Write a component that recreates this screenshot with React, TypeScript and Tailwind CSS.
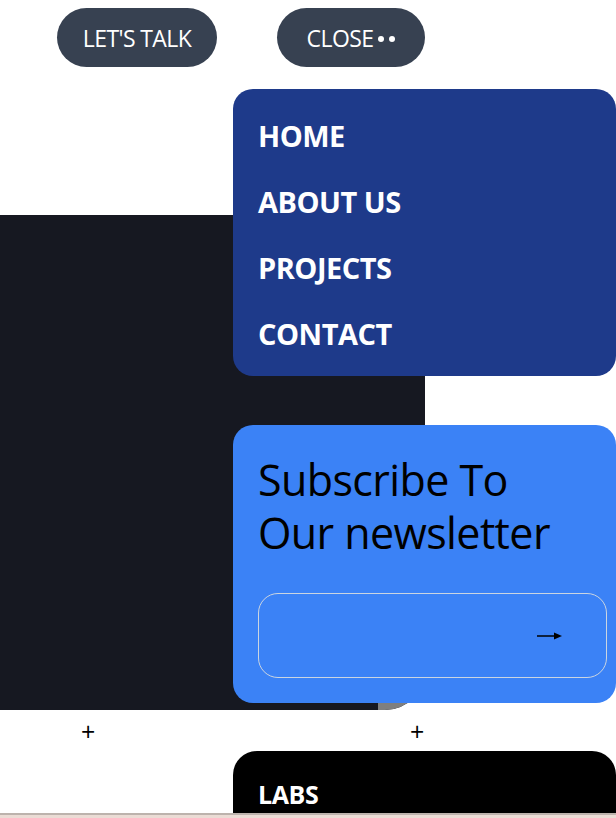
import React from "react";

export default function App() {
  const font = { fontFamily: '"Open Sans", "Noto Sans", sans-serif' };
  return (
    <div
      className="relative w-[616px] h-[818px] overflow-hidden bg-white"
      style={font}
    >
      <header className="flex items-start gap-[60px] pt-[8px] pl-[57px]">
        <button className="h-[59px] w-[160px] rounded-full bg-[#374151] pt-[2px] text-[23px] text-white tracking-[-0.6px]">
          LET'S TALK
        </button>
        <button className="flex h-[59px] w-[148px] items-center justify-center gap-[5px] rounded-full bg-[#374151] pt-[2px] text-[23px] text-white tracking-[-0.6px]">
          <span>CLOSE</span>
          <span className="flex gap-[5px] pt-[1px]">
            <span className="h-[6px] w-[6px] rounded-full bg-white" />
            <span className="h-[6px] w-[6px] rounded-full bg-white" />
          </span>
        </button>
      </header>

      <div className="relative mt-[148px] h-[495px] w-[425px] overflow-hidden rounded-br-[40px] bg-[#161821]">
        <div className="absolute bottom-0 right-0 h-[60px] w-[47px] bg-[#7f7f7f]" />
      </div>

      <div className="relative h-[41px] text-[25px] leading-none text-black">
        <span className="absolute left-[81px] top-[9px]">+</span>
        <span className="absolute left-[410px] top-[9px]">+</span>
      </div>

      <div className="ml-[233px] h-[80px] rounded-t-[24px] bg-black pl-[25px] pt-[25px]">
        <span className="text-[25px] font-bold text-white tracking-[-0.4px]">
          LABS
        </span>
      </div>

      <nav className="absolute left-[233px] top-[89px] flex h-[287px] w-[383px] flex-col rounded-[20px] bg-[#1e3a8a] pl-[25px] pt-[30px]">
        {["HOME", "ABOUT US", "PROJECTS", "CONTACT"].map((t) => (
          <a
            key={t}
            className="block h-[66px] shrink-0 text-[29px] font-bold leading-[34px] text-white tracking-[-0.5px]"
          >
            {t}
          </a>
        ))}
      </nav>

      <div className="absolute left-[233px] top-[425px] flex h-[278px] w-[383px] flex-col rounded-[20px] bg-[#3b82f6] pl-[25px] pr-[10px] pt-[28px]">
        <h2 className="text-[43px] leading-[53px] text-black tracking-[-0.6px]">
          <span className="block">Subscribe To</span>
          <span className="block">Our newsletter</span>
        </h2>
        <div className="mt-[34px] flex h-[85px] w-[349px] items-center justify-end rounded-[20px] border border-[#cbd5e1] pr-[44px]">
          <svg width="25" height="8" viewBox="0 0 25 8">
            <line x1="0" y1="4" x2="18" y2="4" stroke="black" strokeWidth="1.5" />
            <polygon points="17,0.5 25,4 17,7.5" fill="black" />
          </svg>
        </div>
      </div>

      <div className="absolute bottom-0 left-0 h-[5px] w-full border-t-2 border-[#bdb3ad] bg-[#ebdcd5]" />
    </div>
  );
}
